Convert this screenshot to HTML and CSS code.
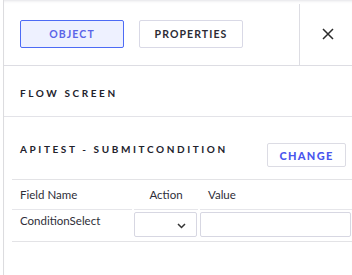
FILE: index.html
```html
<!DOCTYPE html>
<html lang="en">
<head>
    <meta charset="UTF-8">
    <meta name="viewport" content="width=device-width, initial-scale=1.0">
    <title>Flow Screen</title>
    <link rel="stylesheet" href="styles.css">
</head>
<body>
    <div class="panel">
        <div class="topbar">
            <div class="tabs">
                <button class="tab active">OBJECT</button>
                <button class="tab">PROPERTIES</button>
            </div>
            <div class="close">
                <svg width="12" height="12" viewBox="0 0 12 12">
                    <path d="M1 1 L11 11 M11 1 L1 11" stroke="#2b2b2b" stroke-width="1.5" fill="none"/>
                </svg>
            </div>
        </div>

        <div class="section">
            <h3 class="label">FLOW SCREEN</h3>
        </div>

        <div class="section api">
            <div class="api-head">
                <h3 class="label">APITEST - SUBMITCONDITION</h3>
                <button class="change">CHANGE</button>
            </div>

            <div class="grid">
                <div class="th">Field Name</div>
                <div class="th center">Action</div>
                <div class="th">Value</div>

                <div class="td">ConditionSelect</div>
                <div class="td ctl">
                    <div class="select">
                        <svg width="9" height="6" viewBox="0 0 9 6">
                            <path d="M1 1 L4.5 4.5 L8 1" stroke="#333" stroke-width="1.5" fill="none"/>
                        </svg>
                    </div>
                </div>
                <div class="td ctl">
                    <div class="input"></div>
                </div>
            </div>
        </div>
    </div>
</body>
</html>
```

FILE: styles.css
```css
body {
    margin: 0;
    background: #ffffff;
    font-family: Lato, "Open Sans", sans-serif;
    color: #2a2a35;
}

.panel {
    margin-left: 3px;
    height: 275px;
    border-left: 1px solid #dcdcdf;
    box-shadow: inset 0 3px 3px -2px #e2e2e6;
}

.topbar {
    display: flex;
    height: 65px;
    border-bottom: 1px solid #dddde3;
}

.tabs {
    flex: 1;
    display: flex;
    gap: 15px;
    padding: 16px 0 0 16px;
    margin-top: 4px;
    border-right: 1px solid #dddde3;
}

.tab {
    width: 104px;
    height: 28px;
    background: #ffffff;
    border: 1px solid #d9d9e6;
    border-radius: 2px;
    font-family: Lato, sans-serif;
    font-size: 10.5px;
    font-weight: 700;
    letter-spacing: 1.1px;
    color: #2b2b35;
    cursor: pointer;
}

.tab.active {
    background: #eef1ff;
    border-color: #4d6bf5;
    color: #5a64e8;
}

.close {
    width: 52px;
    display: flex;
    align-items: center;
    justify-content: center;
    padding: 3px 0 0 4px;
    box-sizing: border-box;
}

.section {
    border-bottom: 1px solid #e3e3e8;
    height: 51px;
    display: flex;
    align-items: center;
    padding: 4px 0 0 16px;
    box-sizing: border-box;
}

.section.api {
    display: block;
    border-bottom: none;
    height: auto;
    padding: 0 0 0 8px;
}

.label {
    margin: 0;
    font-size: 10px;
    font-weight: 700;
    letter-spacing: 2.6px;
    color: #22222c;
}

.api-head {
    display: flex;
    justify-content: space-between;
    align-items: flex-start;
    padding: 26px 6px 0 8px;
    height: 36px;
}

.change {
    width: 79px;
    height: 24px;
    background: #ffffff;
    border: 1px solid #dcdce4;
    border-radius: 2px;
    font-family: Lato, sans-serif;
    font-size: 11px;
    font-weight: 900;
    letter-spacing: 1.3px;
    color: #4a56ee;
    cursor: pointer;
}

.grid {
    display: grid;
    grid-template-columns: 120px 64px 1fr;
    column-gap: 2px;
    border-top: 1px solid #e3e3e6;
    border-bottom: 1px solid #e3e3e6;
}

.th {
    height: 29px;
    line-height: 29px;
    font-size: 11.5px;
    color: #2e2e38;
    padding-left: 8px;
    border-bottom: 1px solid #e6e6ea;
}

.th.center {
    text-align: center;
    padding-left: 0;
}

.td {
    height: 31px;
    font-size: 11.5px;
    color: #2e2e38;
    padding: 4px 0 0 8px;
    box-sizing: border-box;
}

.td.ctl {
    padding: 2px 1px 0 0;
}

.select, .input {
    height: 25px;
    border: 1px solid #d7d7e2;
    border-radius: 2px;
    box-sizing: border-box;
}

.select {
    display: flex;
    align-items: center;
    justify-content: flex-end;
    padding: 2px 10px 0 0;
}
```
